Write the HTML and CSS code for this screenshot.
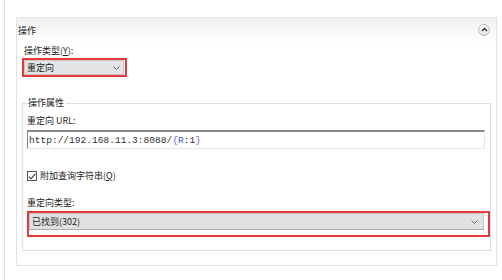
FILE: index.html
```html
<!DOCTYPE html>
<html>
<head>
<meta charset="utf-8">
<link rel="stylesheet" href="styles.css">
</head>
<body>
<div class="frame">
  <div class="panel">
    <div class="panel-head">
      <span class="panel-title">操作</span>
      <span class="collapse">
        <svg width="7" height="5" viewBox="0 0 7 5"><path d="M1 4 L3.5 1.5 L6 4" fill="none" stroke="#333" stroke-width="1.4"/></svg>
      </span>
    </div>
    <div class="panel-body">
      <div class="label">操作类型(<u>Y</u>):</div>
      <div class="hl hl-small">
        <div class="select select-small">
          <span>重定向</span>
          <svg class="chev" width="7" height="4" viewBox="0 0 7 4"><path d="M0.5 0.5 L3.5 3.5 L6.5 0.5" fill="none" stroke="#666" stroke-width="1"/></svg>
        </div>
      </div>
      <fieldset class="group">
        <legend>操作属性</legend>
        <div class="label l-url">重定向 URL:</div>
        <div class="textbox"><span>http://192.168.11.3:8088/</span><span class="brace">{</span><span class="var">R</span><span>:1</span><span class="brace">}</span></div>
        <div class="check-row">
          <span class="checkbox"><svg width="8" height="7" viewBox="0 0 8 7"><path d="M0.8 3.6 L3 5.8 L7.3 0.8" fill="none" stroke="#333" stroke-width="1.1"/></svg></span>
          <span class="check-label">附加查询字符串(<u>Q</u>)</span>
        </div>
        <div class="label l-type">重定向类型:</div>
        <div class="hl hl-wide">
          <div class="select select-wide">
            <span>已找到(302)</span>
            <svg class="chev" width="7" height="4" viewBox="0 0 7 4"><path d="M0.5 0.5 L3.5 3.5 L6.5 0.5" fill="none" stroke="#666" stroke-width="1"/></svg>
          </div>
        </div>
      </fieldset>
    </div>
  </div>
</div>
</body>
</html>
```
FILE: styles.css
```css
html, body {
  margin: 0;
  padding: 0;
  background: #fff;
}
body {
  width: 502px;
  height: 280px;
  overflow: hidden;
  font-family: "Noto Sans CJK SC", "Noto Sans", sans-serif;
  font-size: 9px;
  color: #1e1e1e;
}
u { text-decoration: underline; text-underline-offset: 1px; }
.frame {
  margin-left: 4px;
  border-left: 1px solid #dcdcdc;
  height: 280px;
  padding-top: 17px;
  padding-left: 11px;
  box-sizing: border-box;
}
.panel {
  width: 481px;
  border: 1px solid #e2e2e2;
  box-sizing: border-box;
}
.panel-head {
  height: 24px;
  display: flex;
  align-items: center;
  justify-content: space-between;
  padding: 0 6px 0 1px;
  background: linear-gradient(#f1f1f1, #fdfdfd);
}
.panel-title {
  line-height: 12px;
  margin-top: 2px;
}
.collapse {
  width: 10px;
  height: 10px;
  border: 1px solid #bdbdbd;
  border-radius: 50%;
  background: linear-gradient(#fafafa, #e4e4e4);
  display: flex;
  align-items: center;
  justify-content: center;
}
.collapse svg { margin-top: -1px; }
.panel-body {
  padding: 3px 5px 14px 5px;
}
.label {
  line-height: 12px;
  padding-left: 2px;
}
.hl {
  border: 2px solid #e8393a;
  box-sizing: border-box;
}
.hl-small {
  width: 105px;
  height: 19px;
  margin-top: 1px;
  padding: 0 1px 0 0;
}
.select {
  display: flex;
  align-items: center;
  justify-content: space-between;
  box-sizing: border-box;
  background: #e3e4e6;
  border: 1px solid #c9c9c9;
  padding: 0 5px 0 2px;
  line-height: 12px;
}
.select-small {
  height: 15px;
  padding-right: 3px;
}
.select-wide {
  height: 17px;
  background: #e1e1e1;
  border-color: #c2c2c2;
  border-bottom-color: #adadad;
}
.group {
  margin: 20px 0 0 0;
  padding: 0 5px 13px 4px;
  border: 1px solid #dedede;
  min-width: 0;
}
.group legend {
  padding: 0 2px 0 1px;
  line-height: 12px;
}
.l-url {
  margin-top: 6px;
  padding-left: 0;
}
.textbox {
  margin-top: 3px;
  height: 19px;
  box-sizing: border-box;
  border: 1px solid #e6e6e6;
  border-top: 2px solid #8a8a8a;
  border-left: 1px solid #8a8a8a;
  display: flex;
  align-items: center;
  padding-left: 1px;
  font-family: "Liberation Mono", monospace;
  font-size: 9.55px;
  color: #333;
  white-space: pre;
}
.brace { color: #6b5ed6; }
.var { color: #2f55d4; }
.check-row {
  margin-top: 21px;
  display: flex;
  align-items: center;
  height: 12px;
}
.checkbox {
  width: 10px;
  height: 10px;
  box-sizing: border-box;
  border: 1px solid #555;
  display: flex;
  align-items: center;
  justify-content: center;
  margin-right: 3px;
}
.check-label { line-height: 12px; }
.l-type {
  margin-top: 15px;
  padding-left: 0;
}
.hl-wide {
  margin-top: 2px;
  margin-right: -5px;
  height: 26px;
  padding: 0 4px 5px 0;
}
```
